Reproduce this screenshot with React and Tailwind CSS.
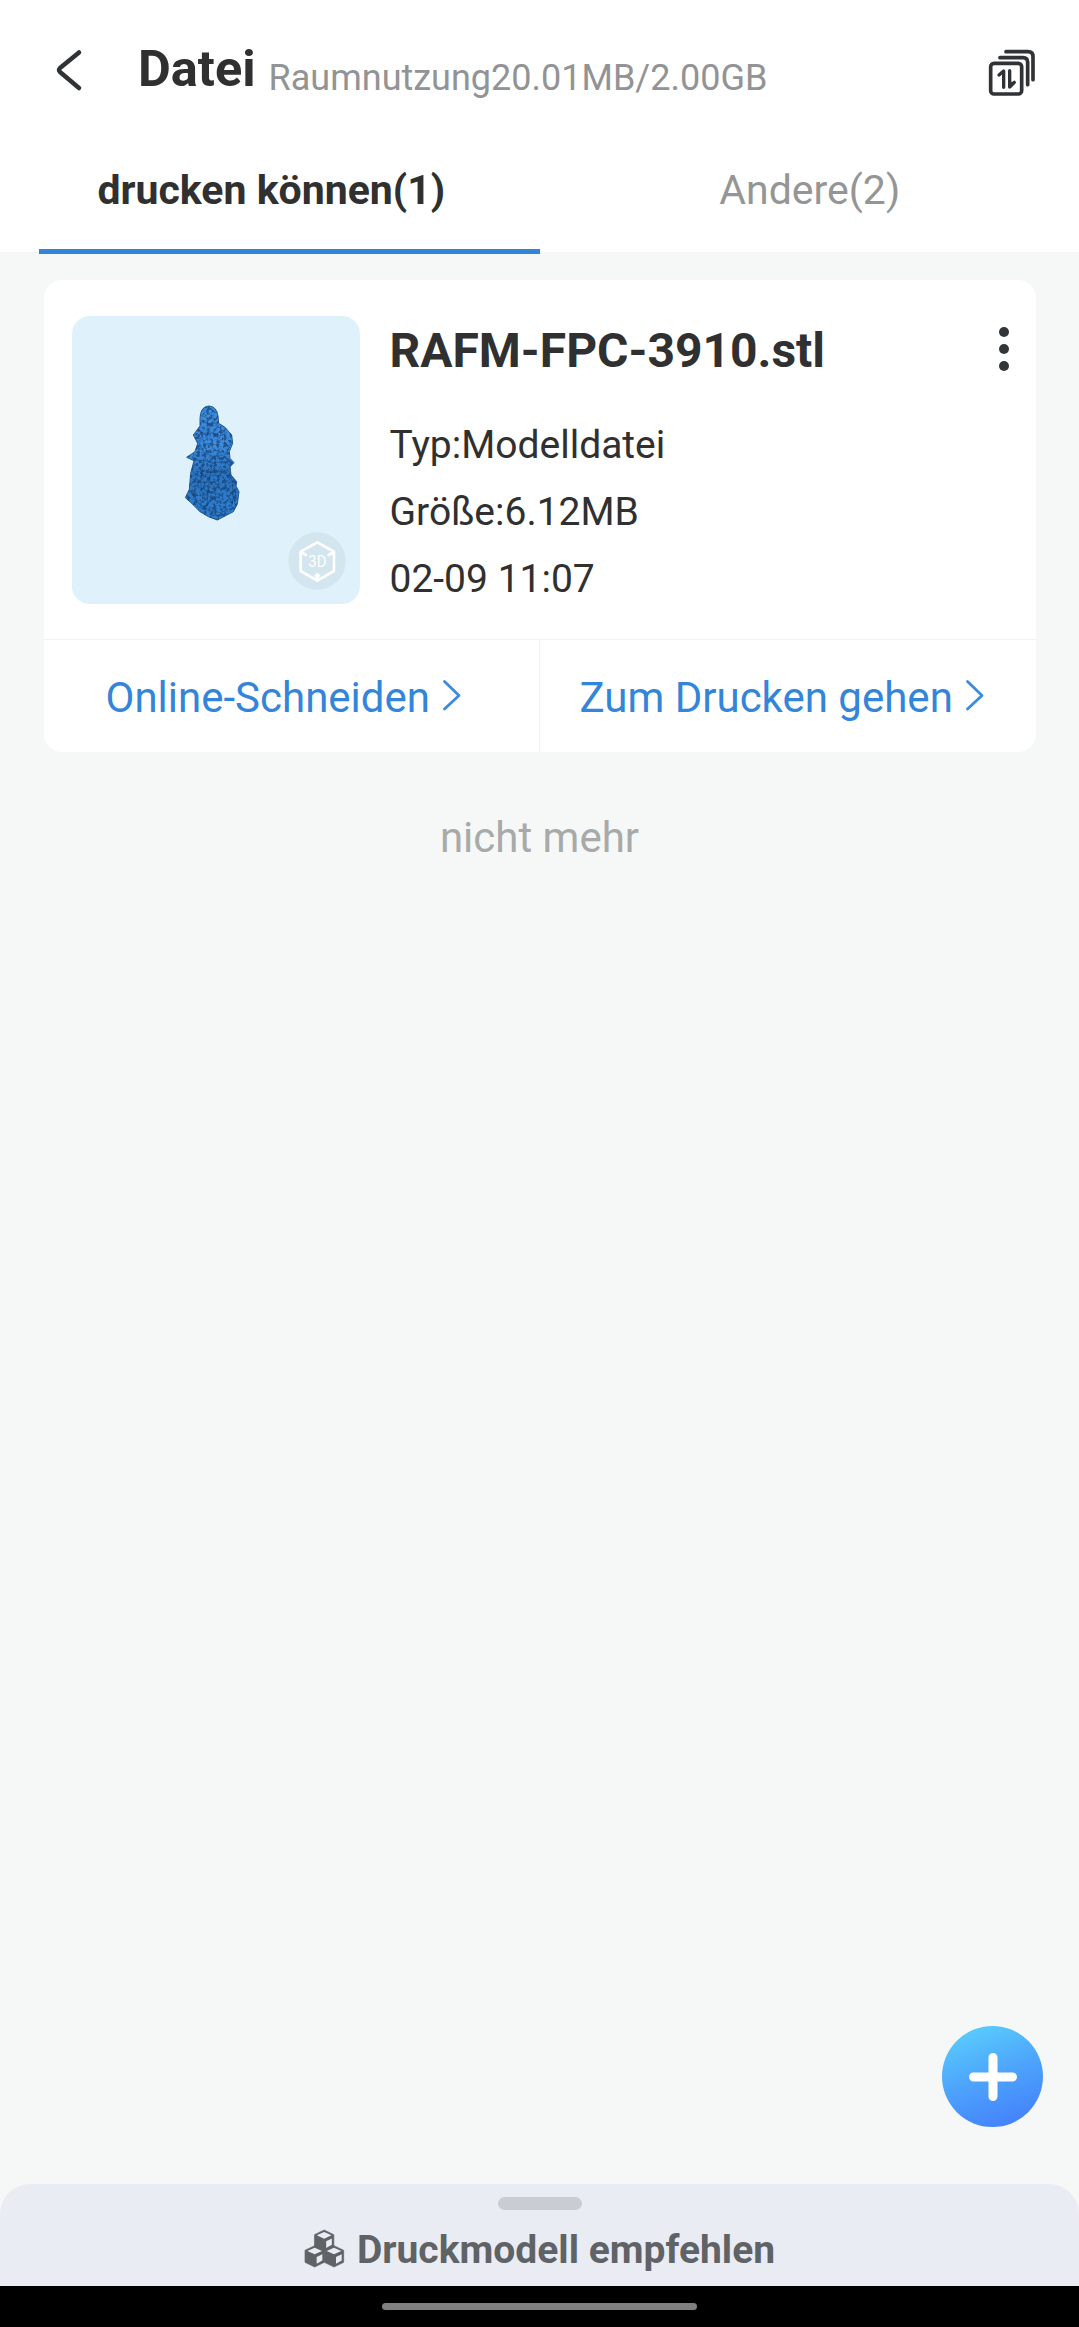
import { useState } from "react";

const files = [
  { id: 1, name: "RAFM-FPC-3910.stl", type: "Modelldatei", size: "6.12MB", date: "02-09 11:07" },
];

const tabs = [
  { id: "print", label: "drucken können(1)" },
  { id: "other", label: "Andere(2)" },
];

function SortIcon() {
  return (
    <svg viewBox="80 55 150 150" className="size-[50px]" fill="none" stroke="#303335" strokeWidth="11" strokeLinecap="round" strokeLinejoin="round">
      <rect x="91" y="101" width="93" height="92" rx="10" />
      <path d="M119 84h69q14 0 14 14v67" />
      <path d="M137 66h66q15 0 15 15v69" />
      <path d="M116 136l14-12v49M148 123v49l14-14" strokeWidth="10" />
      <path d="M148 158h15l-15 16z" fill="#303335" strokeWidth="3" />
    </svg>
  );
}

function Chevron() {
  return (
    <svg viewBox="0 0 20 34" className="h-[34px] w-5" fill="none" stroke="#3a8ce0" strokeWidth="2.8" strokeLinecap="round" strokeLinejoin="round">
      <path d="M2.5 2.500L17 16.500 2.500 30" />
    </svg>
  );
}

function Cube({ x, y }) {
  return (
    <g transform={`translate(${x} ${y})`}>
      <path d="M0 0l29 14v36L0 64l-29-14V14z" fill="#606366" stroke="#606366" strokeWidth="2" strokeLinejoin="round" />
      <path d="M0 6l22 10L0 26l-22-10z" fill="#eaecf4" />
      <path d="M6 34l17-8.500v19L6 54z" fill="#eaecf4" />
    </g>
  );
}

function CubesIcon() {
  return (
    <svg viewBox="73 172 122 117" className="h-[39px] w-[41px]">
      <Cube x={133} y={175} />
      <Cube x={104.500} y={222} />
      <Cube x={162.500} y={222} />
    </svg>
  );
}

function ModelPreview() {
  return (
    <svg viewBox="126 138 864 864" className="size-[288px] shrink-0 rounded-[18px] bg-[#dff1fb]">
      <defs>
        <filter id="grain" x="0" y="0" width="1" height="1" colorInterpolationFilters="sRGB">
          <feTurbulence type="fractalNoise" baseFrequency="0.1" numOctaves="3" seed="4" />
          <feColorMatrix values="0 0 0 0 0.07  0 0 0 0 0.2  0 0 0 0 0.37  5 0 0 0 -2.200" />
          <feComposite in2="SourceGraphic" operator="in" />
        </filter>
        <linearGradient id="body" x1="0" y1="0" x2="0" y2="1">
          <stop offset="0" stopColor="#3a8ade" />
          <stop offset="0.4" stopColor="#3888dc" />
          <stop offset="0.6" stopColor="#2b74c0" />
          <stop offset="1" stopColor="#2f82d6" />
        </linearGradient>
        <path id="figure" d="M512 430Q518 408 538 408 560 410 564 438L566 460 585 472 605 495 608 520 598 545 600 565 612 578 600 590 603 615 620 635 618 648 627 665 622 702 610 725 585 738 562 750 535 740 510 725 485 700 466 683 478 658 482 610 492 572 470 562 495 545 503 520 490 495 510 468 510 445Z" />
      </defs>
      <use href="#figure" fill="url(#body)" stroke="#235d96" strokeWidth="3" strokeLinejoin="round" />
      <g fill="none" stroke="#173f6b" strokeWidth="4" strokeLinecap="round" opacity="0.4">
        <path d="M514 452l22 10 28-4M508 480l18 12 24-4 12 14M508 520l12 26 30 14 34-6 12-18" />
        <path d="M494 570l30 2 24 6 40-4 14 16M520 578l-8 52 6 56M545 590l-10 60-4 60M592 596l14 36 4 50-8 36" />
        <path d="M484 662l20 36 30 22 36 8 30-12" />
      </g>
      <path d="M528 420l18-4 8 24-14 18-18-10zM520 520l28-10 30 10-8 26-34 2zM572 476l20 18-4 22-14-12z" fill="#4398e6" opacity="0.4" />
      <use href="#figure" filter="url(#grain)" opacity="0.6" />

      <circle cx="861" cy="873" r="86" fill="#d3e5ee" />
      <g fill="none" stroke="#fff" strokeWidth="8" strokeLinejoin="round" strokeLinecap="round">
        <path d="M862 817l50 28v58l-50 29-50-29v-58z" />
        <path d="M814 847l14 8M910 847l-14 8M862 932v-20" />
      </g>
      <path d="M852 914l10 18 10-18z" fill="#fff" />
      <text x="862" y="892" textAnchor="middle" fill="#fff" fontFamily="Roboto, sans-serif" fontSize="52" textLength="54" lengthAdjust="spacingAndGlyphs">3D</text>
    </svg>
  );
}

function FileCard({ name, type, size, date }) {
  return (
    <div className="mx-auto w-[992px] overflow-hidden rounded-[18px] bg-white">
      <div className="flex h-[359px] px-7 pt-9">
        <ModelPreview />
        <div className="ml-[30px] flex-1 text-[39px] leading-[67px] text-[#303030]">
          <h2 className="mb-[26px] text-[48px] leading-[70px] font-bold">{name}</h2>
          <p>Typ:{type}</p>
          <p>Größe:{size}</p>
          <p>{date}</p>
        </div>
        <button className="mt-[11px] -mr-[1px] flex h-[44px] flex-col items-center justify-between" aria-label="Mehr">
          <span className="size-[10px] rounded-full bg-[#333638]" />
          <span className="size-[10px] rounded-full bg-[#333638]" />
          <span className="size-[10px] rounded-full bg-[#333638]" />
        </button>
      </div>
      <div className="flex h-[113px] border-t border-[#f1f2f3] text-[42px] leading-[60px] text-[#3385d9]">
        <button className="flex w-[496px] items-center border-r border-[#f1f2f3] pl-[62px]">
          <span className="pt-[4px]">Online-Schneiden</span>
          <span className="ml-[12px]"><Chevron /></span>
        </button>
        <button className="flex flex-1 items-center pl-[40px]">
          <span className="pt-[4px]">Zum Drucken gehen</span>
          <span className="ml-[12px]"><Chevron /></span>
        </button>
      </div>
    </div>
  );
}

export default function App() {
  const [activeTab, setActiveTab] = useState("print");

  return (
    <div className="relative flex h-[2327px] w-[1079px] flex-col overflow-hidden bg-[#f6f8f8] font-[Roboto,sans-serif]">
      <header className="flex h-[138px] shrink-0 items-start bg-white">
        <button className="mt-[46px] ml-[53px]" aria-label="Zurück">
          <svg viewBox="0 0 32 48" className="h-12 w-8" fill="none" stroke="#303335" strokeWidth="4.500" strokeLinecap="round" strokeLinejoin="round">
            <path d="M26 6.500L7 22Q5 24 7 26L26 42" />
          </svg>
        </button>
        <h1 className="mt-[39px] ml-[53px] text-[50.5px] leading-[60px] font-bold text-[#303030]">Datei</h1>
        <span className="mt-[48px] ml-[13px] text-[36px] leading-[60px] text-[#929394]">Raumnutzung20.01MB/2.00GB</span>
        <button className="mt-[48px] mr-[42px] ml-auto" aria-label="Sortieren">
          <SortIcon />
        </button>
      </header>

      <nav className="relative flex h-[114px] shrink-0 bg-white pb-[9px] pl-[2px] text-[41px]">
        {tabs.map((tab) => (
          <button
            key={tab.id}
            onClick={() => setActiveTab(tab.id)}
            className={`flex-1 ${activeTab === tab.id ? "font-bold text-[#303030]" : "text-[#959595]"}`}
          >
            {tab.label}
          </button>
        ))}
        <span className={`absolute -bottom-[2px] h-[5px] w-[501px] bg-[#3085d9] ${activeTab === "print" ? "left-[39px]" : "left-[540px]"}`} />
      </nav>

      <main className="flex-1 pt-7">
        {files.map((file) => (
          <FileCard key={file.id} {...file} />
        ))}
        <p className="mt-14 text-center text-[42px] leading-[60px] text-[#a8aaaa]">nicht mehr</p>
      </main>

      <button className="absolute top-[2026px] right-[36px] flex size-[101px] items-center justify-center rounded-full bg-linear-160 from-[#5dd4fc] via-[#4da3fb] to-[#4379fb]" aria-label="Hinzufügen">
        <svg viewBox="0 0 48 48" className="size-12" stroke="#fff" strokeWidth="9" strokeLinecap="round">
          <path d="M24 4.500v39M4.500 24h39" />
        </svg>
      </button>

      <section className="flex h-[102px] shrink-0 flex-col items-center rounded-t-[30px] bg-[#eaecf4] pt-[13px]">
        <span className="h-[13px] w-[84px] shrink-0 rounded-full bg-[#c9ccd1]" />
        <div className="flex h-[76px] items-center gap-[12px]">
          <CubesIcon />
          <span className="pt-[3px] text-[39px] leading-[60px] font-bold text-[#606366]">Druckmodell empfehlen</span>
        </div>
      </section>
      <footer className="flex h-[41px] shrink-0 justify-center bg-black pt-[17px]">
        <span className="h-[7px] w-[315px] rounded-full bg-[#808080]" />
      </footer>
    </div>
  );
}
